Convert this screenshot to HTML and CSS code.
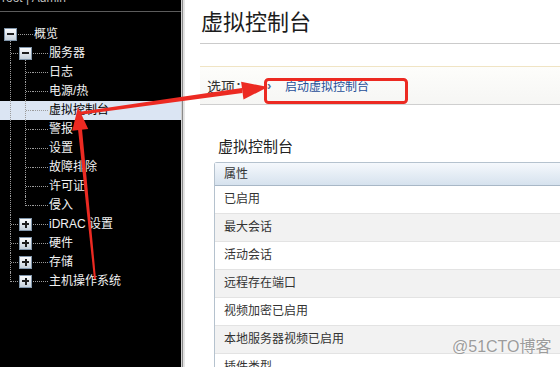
FILE: index.html
```html
<!DOCTYPE html>
<html lang="zh-CN">
<head>
  <meta charset="UTF-8" />
  <meta name="viewport" content="width=device-width, initial-scale=1.0"/>
  <title>虚拟控制台</title>
  <link rel="stylesheet" href="styles.css">
</head>
<body>
  <div class="page">
    <!-- left tree -->
    <div class="sidebar">
      <div class="userbar"><span>root | Admin</span></div>
      <div class="tree">
        <div class="row">
          <span class="cell open"><i class="box"></i></span>
          <span class="cell hline"></span>
          <span class="label">概览</span>
        </div>
        <div class="row">
          <span class="cell tee"></span>
          <span class="cell open"><i class="box"></i></span>
          <span class="cell hline"></span>
          <span class="label">服务器</span>
        </div>
        <div class="row">
          <span class="cell vline"></span>
          <span class="cell tee"></span>
          <span class="cell hline"></span>
          <span class="label">日志</span>
        </div>
        <div class="row">
          <span class="cell vline"></span>
          <span class="cell tee"></span>
          <span class="cell hline"></span>
          <span class="label">电源/热</span>
        </div>
        <div class="row selected">
          <span class="cell vline"></span>
          <span class="cell tee"></span>
          <span class="cell hline"></span>
          <span class="label">虚拟控制台</span>
        </div>
        <div class="row">
          <span class="cell vline"></span>
          <span class="cell tee"></span>
          <span class="cell hline"></span>
          <span class="label">警报</span>
        </div>
        <div class="row">
          <span class="cell vline"></span>
          <span class="cell tee"></span>
          <span class="cell hline"></span>
          <span class="label">设置</span>
        </div>
        <div class="row">
          <span class="cell vline"></span>
          <span class="cell tee"></span>
          <span class="cell hline"></span>
          <span class="label">故障排除</span>
        </div>
        <div class="row">
          <span class="cell vline"></span>
          <span class="cell tee"></span>
          <span class="cell hline"></span>
          <span class="label">许可证</span>
        </div>
        <div class="row">
          <span class="cell vline"></span>
          <span class="cell elbow"></span>
          <span class="cell hline"></span>
          <span class="label">侵入</span>
        </div>
        <div class="row">
          <span class="cell tee"></span>
          <span class="cell"><i class="box plus"></i></span>
          <span class="cell hline"></span>
          <span class="label">iDRAC 设置</span>
        </div>
        <div class="row">
          <span class="cell tee"></span>
          <span class="cell"><i class="box plus"></i></span>
          <span class="cell hline"></span>
          <span class="label">硬件</span>
        </div>
        <div class="row">
          <span class="cell tee"></span>
          <span class="cell"><i class="box plus"></i></span>
          <span class="cell hline"></span>
          <span class="label">存储</span>
        </div>
        <div class="row">
          <span class="cell elbow"></span>
          <span class="cell"><i class="box plus"></i></span>
          <span class="cell hline"></span>
          <span class="label">主机操作系统</span>
        </div>
      </div>
    </div>

    <div class="divider"></div>

    <div class="main">
      <h1 class="title">虚拟控制台</h1>
      <div class="options">
        <span class="options-label">选项：</span>
        <span class="chev">›</span>
        <a class="options-link" href="#">启动虚拟控制台</a>
      </div>

      <div class="section">
        <h2 class="section-title">虚拟控制台</h2>
        <div class="grid">
          <div class="grid-head">属性</div>
          <div class="grid-row">已启用</div>
          <div class="grid-row alt">最大会话</div>
          <div class="grid-row">活动会话</div>
          <div class="grid-row alt">远程存在端口</div>
          <div class="grid-row">视频加密已启用</div>
          <div class="grid-row alt">本地服务器视频已启用</div>
          <div class="grid-row">插件类型</div>
        </div>
      </div>
    </div>
  </div>

  <!-- screenshot annotations -->
  <svg class="marks" width="560" height="367" viewBox="0 0 560 367">
    <rect x="265.5" y="79.5" width="141" height="23" rx="3" fill="none" stroke="#ec2a22" stroke-width="3"/>
    <polygon fill="#ec2a22" points="78,112 78.5,115 242.5,93 242,88"/>
    <polygon fill="#ec2a22" points="268,87 241.1,81.7 243.5,99.5"/>
    <polygon fill="#ec2a22" points="94,279 96,279 82,129 78,129"/>
    <polygon fill="#ec2a22" points="78,107 72.2,130.7 88.2,129.1"/>
  </svg>

  <div class="watermark">@51CTO博客</div>
</body>
</html>
```

FILE: styles.css
```css
html, body {
  margin: 0;
  padding: 0;
  height: 100%;
  overflow: hidden;
  background: #fff;
  font-family: "Liberation Sans", "Noto Sans CJK SC", sans-serif;
}

.page {
  display: flex;
  height: 100vh;
}

/* sidebar */
.sidebar {
  width: 181px;
  flex: none;
  background: #000;
  color: #f2f2f2;
}

.userbar {
  height: 11px;
  border-bottom: 1px solid #5c5c5c;
  overflow: hidden;
  display: flex;
  align-items: flex-end;
  padding-left: 2px;
  padding-bottom: 0;
}

.userbar span {
  font-size: 12px;
  line-height: 14px;
  color: #bdbdbd;
  margin-bottom: 6px;
}

.tree {
  padding-top: 13px;
  padding-left: 3px;
}

.row {
  display: flex;
  height: 19px;
  margin-left: -3px;
  padding-left: 3px;
}

.row.selected {
  background: #dbe5f3;
}

.row.selected .label {
  color: #000;
}

.label {
  font-size: 12px;
  line-height: 19px;
  padding-left: 1px;
  white-space: nowrap;
}

.cell {
  width: 15px;
  height: 19px;
  flex: none;
  position: relative;
}

.cell::before,
.cell::after {
  content: none;
  position: absolute;
}

.vline::before,
.tee::before {
  content: '';
  left: 7px;
  top: 0;
  bottom: 0;
  border-left: 1px dotted #9c9c9c;
}

.elbow::before {
  content: '';
  left: 7px;
  top: 0;
  height: 10px;
  border-left: 1px dotted #9c9c9c;
}

.tee::after,
.elbow::after {
  content: '';
  left: 8px;
  right: 0;
  top: 9px;
  border-top: 1px dotted #9c9c9c;
}

.hline::after {
  content: '';
  left: 0;
  right: 0;
  top: 9px;
  border-top: 1px dotted #9c9c9c;
}

.open::after {
  content: '';
  left: 7px;
  top: 16px;
  bottom: 0;
  border-left: 1px dotted #9c9c9c;
}

.box {
  position: absolute;
  left: 1px;
  top: 3px;
  width: 11px;
  height: 11px;
  border: 1px solid #8196ab;
  background: linear-gradient(#fbfcfe, #c6d1dc);
  z-index: 1;
}

.box::before {
  content: '';
  position: absolute;
  left: 2px;
  top: 4px;
  width: 7px;
  height: 2px;
  background: #1e1e1e;
}

.box.plus::after {
  content: '';
  position: absolute;
  left: 4.5px;
  top: 1.5px;
  width: 2px;
  height: 7px;
  background: #1e1e1e;
}

.divider {
  width: 4px;
  flex: none;
  background: linear-gradient(to right, #d2d2d2 0, #d2d2d2 1px, #8a8a8a 1px, #8a8a8a 2px, #dedede 2px, #e8e8e8 4px);
}

/* content */
.main {
  flex: 1;
  min-width: 0;
  padding-left: 15px;
  overflow: hidden;
  color: #222;
}

.title {
  margin: 0;
  height: 38px;
  padding: 5px 0 0 1px;
  font-size: 22px;
  line-height: 30px;
  font-weight: normal;
  color: #1c1c1c;
  border-bottom: 1px solid #cbcbcb;
  font-family: "Noto Sans CJK SC", sans-serif;
}

.options {
  margin-top: 22px;
  height: 37px;
  border-top: 1px solid #f0e4c4;
  border-bottom: 1px solid #cfcfcf;
  background: linear-gradient(#fdfdfb, #f6f6f4);
  display: flex;
  align-items: center;
  padding-left: 7px;
}

.options-label {
  font-size: 14px;
  color: #333;
  width: 60px;
  font-family: "Noto Sans CJK SC", sans-serif;
}

.chev {
  font-size: 13px;
  color: #4d6b92;
  width: 18px;
  font-weight: bold;
}

.options-link {
  font-size: 12px;
  color: #1f4f99;
  text-decoration: none;
}

.section {
  padding-left: 14px;
  padding-top: 32px;
}

.section-title {
  margin: 0 0 5px;
  padding-left: 4px;
  font-size: 15px;
  line-height: 20px;
  font-weight: normal;
  color: #222;
}

.grid {
  margin-right: -10px;
  border: 1px solid #b5c2ce;
  border-radius: 3px 0 0 0;
  border-bottom: none;
}

.grid-head {
  height: 22px;
  line-height: 22px;
  padding-left: 9px;
  font-size: 12px;
  color: #333;
  background: linear-gradient(#f5f8fc, #d6e2ee);
  border-bottom: 1px solid #a8b7c6;
}

.grid-row {
  height: 27px;
  line-height: 27px;
  padding-left: 9px;
  font-size: 12px;
  color: #333;
  background: #fff;
  border-bottom: 1px solid #e3e3e3;
}

.grid-row.alt {
  background: #f2f2f2;
}

/* overlays */
.marks {
  position: absolute;
  left: 0;
  top: 0;
  pointer-events: none;
}

.watermark {
  position: absolute;
  left: 452px;
  top: 337px;
  font-size: 16px;
  line-height: 20px;
  color: #9c9c9c;
  text-shadow: 0 0 2px #fff;
  font-family: "Liberation Sans", "Noto Sans CJK SC", sans-serif;
}
```
